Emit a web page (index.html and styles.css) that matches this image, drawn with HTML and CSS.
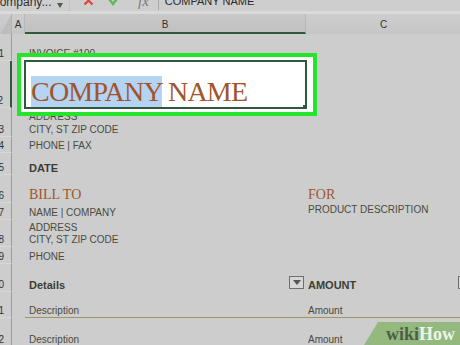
FILE: index.html
```html
<!DOCTYPE html>
<html>
<head>
<meta charset="utf-8">
<link rel="stylesheet" href="styles.css">
</head>
<body>
<div class="toolbar">
  <div class="namebox"><span class="name">Company...</span><span class="tri"></span></div>
  <svg class="ic-x" width="11" height="11" viewBox="0 0 11 11"><path d="M1.5 -3.5 L9.5 4.5 M9.5 -3.5 L1.5 4.5" stroke="#e0423c" stroke-width="2.2" fill="none"/></svg>
  <svg class="ic-ok" width="12" height="11" viewBox="0 0 12 11"><path d="M1 -1 L5 4 L11 -4" stroke="#5cb85c" stroke-width="2.4" fill="none"/></svg>
  <span class="fx">fx</span>
  <span class="fsep"></span>
  <span class="ftext">COMPANY NAME</span>
</div>

<div class="sheet">
  <div class="hrow">
    <div class="corner"></div>
    <div class="h ha">A</div>
    <div class="h hb">B</div>
    <div class="h hc">C</div>
  </div>

  <div class="row r1"><div class="rn">1</div><div class="c ca"></div><div class="c cb">INVOICE #100</div><div class="c cc"></div></div>

  <div class="row r2"><div class="rn rn-sel">2</div><div class="c ca"></div>
    <div class="cb sel"><span class="big"><span class="hl">COMPANY</span> NAME</span><span class="handle"></span></div>
    <div class="c cc"></div></div>

  <div class="row r3"><div class="rn">3</div><div class="c ca"></div><div class="c cb"><div class="lines13">ADDRESS<br>CITY, ST ZIP CODE</div></div><div class="c cc"></div></div>

  <div class="row r4"><div class="rn">4</div><div class="c ca"></div><div class="c cb">PHONE | FAX</div><div class="c cc"></div></div>

  <div class="row r5"><div class="rn">5</div><div class="c ca"></div><div class="c cb bold">DATE</div><div class="c cc"></div></div>

  <div class="row r6"><div class="rn">6</div><div class="c ca"></div><div class="c cb serif">BILL TO</div><div class="c cc serif">FOR</div></div>

  <div class="row r7"><div class="rn">7</div><div class="c ca"></div><div class="c cb">NAME | COMPANY</div><div class="c cc lift">PRODUCT DESCRIPTION</div></div>

  <div class="row r8"><div class="rn">8</div><div class="c ca"></div><div class="c cb"><div class="lines12">ADDRESS<br>CITY, ST ZIP CODE</div></div><div class="c cc"></div></div>

  <div class="row r9"><div class="rn">9</div><div class="c ca"></div><div class="c cb">PHONE</div><div class="c cc"></div></div>

  <div class="row r10"><div class="rn">10</div><div class="c ca"></div>
    <div class="c cb bold"><span>Details</span><span class="dd"></span></div>
    <div class="c cc bold"><span>AMOUNT</span><span class="dd"></span></div></div>

  <div class="row r11"><div class="rn">11</div><div class="c ca"></div><div class="c cb gold">Description</div><div class="c cc gold">Amount</div></div>

  <div class="row r12"><div class="rn">12</div><div class="c ca"></div><div class="c cb">Description</div><div class="c cc">Amount</div></div>
</div>

<div class="wh"><span class="wiki">wiki</span><span class="how">How</span></div>
</body>
</html>
```
FILE: styles.css
```css
html, body {
  margin: 0;
  padding: 0;
}
body {
  width: 460px;
  height: 345px;
  overflow: hidden;
  position: relative;
  background: #cdcdcd;
  font-family: "Liberation Sans", Arial, sans-serif;
  color: #4a4a40;
}

/* toolbar */
.toolbar {
  display: flex;
  align-items: flex-start;
  height: 11px;
  overflow: hidden;
  background: #cecece;
  border-bottom: 3px solid #dadada;
}
.namebox {
  width: 69px;
  display: flex;
  align-items: flex-start;
  border-right: 1px solid #c2c2c2;
  height: 11px;
}
.name {
  margin-left: -9px;
  margin-top: -4px;
  font-size: 12px;
  line-height: 12px;
  color: #2e2e2e;
  white-space: nowrap;
}
.tri {
  margin-left: 6px;
  margin-top: 3px;
  width: 0;
  height: 0;
  border-left: 3px solid transparent;
  border-right: 3px solid transparent;
  border-top: 5px solid #555;
}
.ic-x { margin-left: 13px; }
.ic-ok { margin-left: 14px; }
.fx {
  margin-left: 18px;
  margin-top: -6px;
  font-family: "Liberation Serif", serif;
  font-style: italic;
  font-size: 15px;
  line-height: 15px;
  color: #7a7a7a;
}
.fsep {
  margin-left: 9px;
  width: 1px;
  height: 10px;
  background: #a9a9a9;
}
.ftext {
  margin-left: 6px;
  margin-top: -4px;
  font-size: 11px;
  line-height: 11px;
  color: #2a2a2a;
  white-space: nowrap;
}

/* sheet */
.sheet {
  width: 475px;
}
.hrow {
  display: flex;
  height: 20px;
  background: linear-gradient(#cdcdcd, #c6c6c6);
}
.corner {
  width: 12px;
  box-sizing: border-box;
  border-right: 1px solid #b3b3b3;
  background: linear-gradient(to bottom right, transparent 52%, #bdbdbd 52%);
}
.h {
  box-sizing: border-box;
  display: flex;
  align-items: center;
  justify-content: center;
  font-size: 10px;
  color: #333;
}
.ha { width: 13px; border-right: 1px solid #b8b8b8; }
.hb {
  width: 281px;
  background: linear-gradient(#c8c8c8, #c1c1c1);
  border-bottom: 2px solid #2f5b3d;
  border-right: 1px solid #b8b8b8;
  padding-top: 2px;
}
.hc { width: 169px; padding-right: 14px; }

.row {
  display: flex;
}
.r1 { height: 27px; }
.r2 { height: 47px; }
.r3 { height: 29px; }
.r4 { height: 16px; }
.r5 { height: 22px; }
.r6 { height: 28px; }
.r7 { height: 17px; }
.r8 { height: 27px; }
.r9 { height: 17px; }
.r10 { height: 28px; }
.r11 { height: 26px; }
.r12 { height: 29px; }

.rn {
  width: 12px;
  flex: none;
  box-sizing: border-box;
  display: flex;
  justify-content: flex-end;
  align-items: flex-end;
  padding: 0 7px 0 0;
  border-right: 1px solid #9d9d9d;
  border-bottom: 1px solid #d8d8d8;
  font-size: 10px;
  line-height: 12px;
  color: #333;
  overflow: hidden;
  white-space: nowrap;
}
.rn-sel {
  border-right: 2px solid #2f5b3d;
}

.c {
  box-sizing: border-box;
  display: flex;
  align-items: flex-end;
  padding: 0 0 1px 4px;
  font-size: 10px;
  line-height: 12px;
  white-space: nowrap;
  flex: none;
}
.ca { width: 13px; padding-left: 0; }
.cb { width: 281px; flex: none; }
.cc { width: 169px; padding-left: 2px; }

.lines13 { line-height: 13px; }
.lines12 { line-height: 12px; }

.bold {
  font-weight: bold;
  font-size: 11px;
  color: #3d3d32;
}
.serif {
  font-family: "Liberation Serif", serif;
  font-size: 14px;
  line-height: 16px;
  color: #9c5630;
  padding-bottom: 0;
}
.lift { padding-bottom: 4px; }
.gold {
  border-bottom: 1px solid #a3955f;
  padding-bottom: 0;
}

/* dropdown filter buttons */
.dd {
  margin-left: auto;
  margin-right: 2px;
  margin-bottom: 2px;
  width: 15px;
  height: 13px;
  box-sizing: border-box;
  border: 1px solid #6f6f6f;
  background: #d6d6d6;
  display: flex;
  align-items: center;
  justify-content: center;
}
.dd::after {
  content: "";
  width: 0;
  height: 0;
  border-left: 4px solid transparent;
  border-right: 4px solid transparent;
  border-top: 5px solid #555;
}

/* selected cell */
.sel {
  position: relative;
  z-index: 2;
  box-sizing: border-box;
  width: 281px;
  background: #fff;
  display: flex;
  align-items: flex-end;
  padding: 0 0 2px 6px;
}
.sel::after {
  content: "";
  position: absolute;
  left: -1px;
  top: -1px;
  right: -1px;
  bottom: -1px;
  border: 2px solid #2d5a3b;
  box-shadow: 0 0 0 3px #fff;
}
.sel::before {
  content: "";
  position: absolute;
  left: -8px;
  top: -8px;
  right: -11px;
  bottom: -8px;
  border: 4px solid #25e42c;
  box-shadow: inset 0 0 0 3px #fff;
}
.handle {
  position: absolute;
  right: -1px;
  bottom: -1px;
  width: 4px;
  height: 4px;
  background: #2d5a3b;
  z-index: 1;
}
.big {
  font-family: "Liberation Serif", serif;
  font-size: 28px;
  line-height: 28px;
  letter-spacing: -0.8px;
  color: #a0552a;
  white-space: nowrap;
}
.hl {
  background: #b5d3f3;
}

/* wikiHow badge */
.wh {
  position: absolute;
  right: 0;
  bottom: 0;
  width: 96px;
  height: 23px;
  box-sizing: border-box;
  padding: 3px 0 0 22px;
  background: #93b97f;
  clip-path: polygon(14px 0, 100% 0, 100% 100%, 0 100%);
  font-family: "Liberation Serif", serif;
  font-weight: bold;
  font-size: 18px;
  line-height: 18px;
  white-space: nowrap;
  z-index: 3;
}
.wiki { color: #4f5d46; }
.how { color: #eef4e8; }
```
